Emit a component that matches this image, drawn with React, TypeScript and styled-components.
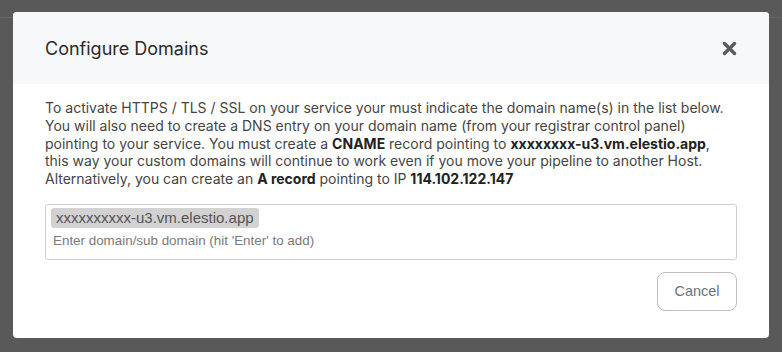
import React from "react";
import styled, { createGlobalStyle } from "styled-components";

const Global = createGlobalStyle`
  html, body { margin: 0; padding: 0; }
  body { background: #595959; font-family: Inter, "Noto Sans", sans-serif; }
`;

const Page = styled.div`
  width: 782px;
  height: 352px;
  position: relative;
  overflow: hidden;
  background: #595959;
`;

const TopBar = styled.div`
  height: 17px;
  border-bottom: 1px solid #676767;
`;

const Overlay = styled.div`
  position: absolute;
  inset: 0;
  padding: 12px 13px 0;
`;

const Modal = styled.div`
  width: 756px;
  height: 326px;
  background: #fff;
  border-radius: 4px;
  overflow: hidden;
  display: flex;
  flex-direction: column;
`;

const Header = styled.div`
  height: 72px;
  box-sizing: border-box;
  background: #f7f8fa;
  display: flex;
  align-items: center;
  justify-content: space-between;
  padding: 0 32px;
`;

const Title = styled.h2`
  margin: 0;
  font-family: Inter, sans-serif;
  font-weight: 400;
  font-size: 18px;
  color: #2b2b2b;
`;

const CloseButton = styled.button`
  border: 0;
  background: transparent;
  padding: 0;
  width: 15px;
  height: 15px;
  display: flex;
  cursor: pointer;
`;

const Body = styled.div`
  padding: 15px 32px 0;
  display: flex;
  flex-direction: column;
`;

const Intro = styled.p`
  margin: 0;
  font-family: Inter, sans-serif;
  font-size: 14px;
  line-height: 17.8px;
  color: #454545;
`;

const Strong = styled.b`
  font-weight: 700;
  color: #222;
`;

const TagInput = styled.div`
  margin-top: 16px;
  height: 56px;
  box-sizing: border-box;
  border: 1px solid #cfcfcf;
  border-radius: 3px;
  padding: 3px 5px;
  display: flex;
  flex-direction: column;
  align-items: flex-start;
  font-family: "Liberation Sans", Arial, sans-serif;
`;

const Tag = styled.span`
  background: #d2d2d2;
  color: #555;
  font-size: 15px;
  line-height: 20px;
  height: 20px;
  padding: 0 5px;
  border-radius: 3px;
`;

const Field = styled.input`
  border: 0;
  outline: none;
  padding: 0 2px;
  margin-top: 3px;
  width: 100%;
  font-family: "Liberation Sans", Arial, sans-serif;
  font-size: 13.4px;
  line-height: 20px;
  color: #555;
  background: transparent;
  &::placeholder { color: #7a7a7a; }
`;

const Footer = styled.div`
  display: flex;
  justify-content: flex-end;
  margin-top: 12px;
`;

const CancelButton = styled.button`
  width: 80px;
  height: 39px;
  box-sizing: border-box;
  border: 1px solid #bdbdc4;
  border-radius: 8px;
  background: #fff;
  color: #6c737d;
  font-family: "Liberation Sans", Arial, sans-serif;
  font-size: 14.5px;
  cursor: pointer;
`;

export default function App() {
  return (
    <Page>
      <Global />
      <TopBar />
      <Overlay>
        <Modal>
          <Header>
            <Title>Configure Domains</Title>
            <CloseButton aria-label="Close">
              <svg width="15" height="15" viewBox="0 0 15 15">
                <path d="M2.5 2.5 L12.5 12.5 M12.5 2.5 L2.5 12.5" stroke="#5b5b5b" strokeWidth="3.4" strokeLinecap="round" />
              </svg>
            </CloseButton>
          </Header>
          <Body>
            <Intro>
              To activate HTTPS / TLS / SSL on your service your must indicate the domain name(s) in the list below.
              You will also need to create a DNS entry on your domain name (from your registrar control panel)
              pointing to your service. You must create a <Strong>CNAME</Strong> record pointing to{" "}
              <Strong>xxxxxxxx-u3.vm.elestio.app</Strong>, this way your custom domains will continue to work even if
              you move your pipeline to another Host. Alternatively, you can create an <Strong>A record</Strong>{" "}
              pointing to IP <Strong>114.102.122.147</Strong>
            </Intro>
            <TagInput>
              <Tag>xxxxxxxxxx-u3.vm.elestio.app</Tag>
              <Field placeholder="Enter domain/sub domain (hit 'Enter' to add)" />
            </TagInput>
            <Footer>
              <CancelButton>Cancel</CancelButton>
            </Footer>
          </Body>
        </Modal>
      </Overlay>
    </Page>
  );
}
